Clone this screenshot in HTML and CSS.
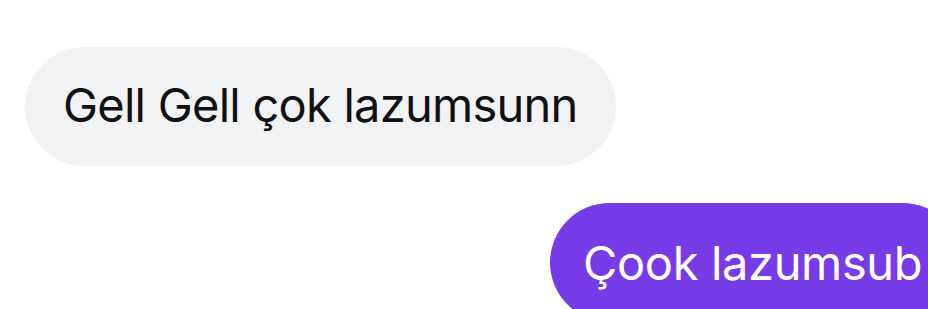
FILE: index.html
```html
<!DOCTYPE html>
<html>
<head>
<meta charset="utf-8">
<link rel="stylesheet" href="styles.css">
</head>
<body>
<div class="chat">
  <div class="row row-in">
    <div class="bubble bubble-in">Gell Gell çok lazumsunn</div>
  </div>
  <div class="row row-out">
    <div class="bubble bubble-out">Çook lazumsub</div>
  </div>
</div>
</body>
</html>
```
FILE: styles.css
```css
html, body {
  margin: 0;
  padding: 0;
  background: #ffffff;
  width: 928px;
  height: 309px;
  overflow: hidden;
}
.chat {
  display: flex;
  flex-direction: column;
  gap: 37px;
  padding-top: 47px;
  font-family: Inter, "Liberation Sans", sans-serif;
}
.row {
  display: flex;
}
.row-in {
  padding-left: 25px;
}
.row-out {
  padding-left: 550px;
}
.bubble {
  box-sizing: border-box;
  height: 119px;
  border-radius: 60px;
  display: flex;
  align-items: center;
  white-space: nowrap;
  font-size: 47px;
  letter-spacing: -0.75px;
}
.bubble-in {
  background: #f2f3f5;
  color: #111114;
  padding: 0 38px 4px 38px;
}
.bubble-out {
  background: #773ce8;
  color: #ffffff;
  padding: 0 40px 0 33px;
  letter-spacing: -0.35px;
  flex-shrink: 0;
}
```
